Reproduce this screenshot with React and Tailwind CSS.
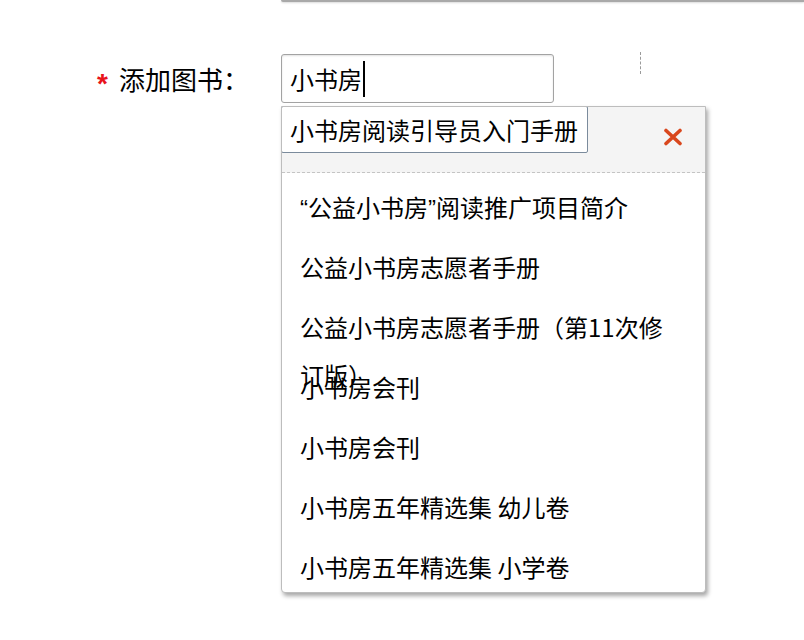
import React from 'react';

const Q = ({ children }) => <span className="font-['Liberation_Sans',sans-serif]">{children}</span>;

const books = [
  <>
    <Q>“</Q>公益小书房<Q>”</Q>阅读推广项目简介
  </>,
  '公益小书房志愿者手册',
  '公益小书房志愿者手册（第11次修订版）',
  '小书房会刊',
  '小书房会刊',
  '小书房五年精选集 幼儿卷',
  '小书房五年精选集 小学卷',
];

export default function App() {
  return (
    <div className="w-[804px] h-[640px] bg-white overflow-hidden text-black font-['Noto_Sans_CJK_SC','Noto_Sans',sans-serif]">
      {/* bottom edge of the field above */}
      <div className="ml-[281px] h-[2px] bg-[#a9a9a9] rounded-bl-[3px] shadow-[0_1px_2px_rgba(0,0,0,0.15)]" />

      {/* Add-book row */}
      <div className="flex mt-[52px]">
        <div className="w-[281px] pl-[97px] flex items-center h-[49px]">
          <span className="text-[#e8141b] text-[28px] leading-none font-['Liberation_Sans',sans-serif] font-bold translate-y-[5px]">*</span>
          <span className="ml-[11px] text-[26px] leading-none">添加图书：</span>
        </div>

        <div className="relative">
          <div className="w-[273px] h-[49px] border border-[#a3a3a3] rounded-[3px] bg-white shadow-[inset_0_1px_2px_rgba(0,0,0,0.12)] flex items-center pl-[8px]">
            <span className="text-[24px] leading-none">小书房</span>
            <span className="inline-block w-[2px] h-[36px] bg-black ml-px" />
          </div>

          {/* suggestion dropdown */}
          <div className="absolute left-0 top-[calc(100%+3px)] w-[425px] h-[487px] border border-[#bdbdbd] rounded-b-[4px] bg-white overflow-hidden shadow-[2px_3px_4px_rgba(0,0,0,0.35)] z-10">
            <div className="h-[66px] bg-[#f4f4f4] border-b border-dashed border-[#c4c4c4] flex">
              <div className="-mt-px -ml-px w-[307px] h-[47px] border border-[#7b8b9c] rounded-[2px] bg-white flex items-center pl-[8px] text-[24px] leading-none">
                小书房阅读引导员入门手册
              </div>
              <svg className="ml-auto mr-[22px] mt-[21px]" width="20" height="18" viewBox="0 0 20 18">
                <path d="M3 2.5 L17 15.5 M17 2.5 L3 15.5" stroke="#d9471d" strokeWidth="3.6" strokeLinecap="round" />
              </svg>
            </div>

            <div className="pt-[4px]">
              {books.map((b, i) => (
                <div key={i} className="h-[60px] pt-[6px] pl-[18px] pr-[30px] text-[24px] leading-[48px]">
                  {b}
                </div>
              ))}
            </div>
          </div>
        </div>

        {/* dashed marker */}
        <div className="ml-[86px] -mt-[2px] w-px h-[22px] border-l border-dashed border-[#9a9a9a]" />
      </div>
    </div>
  );
}
